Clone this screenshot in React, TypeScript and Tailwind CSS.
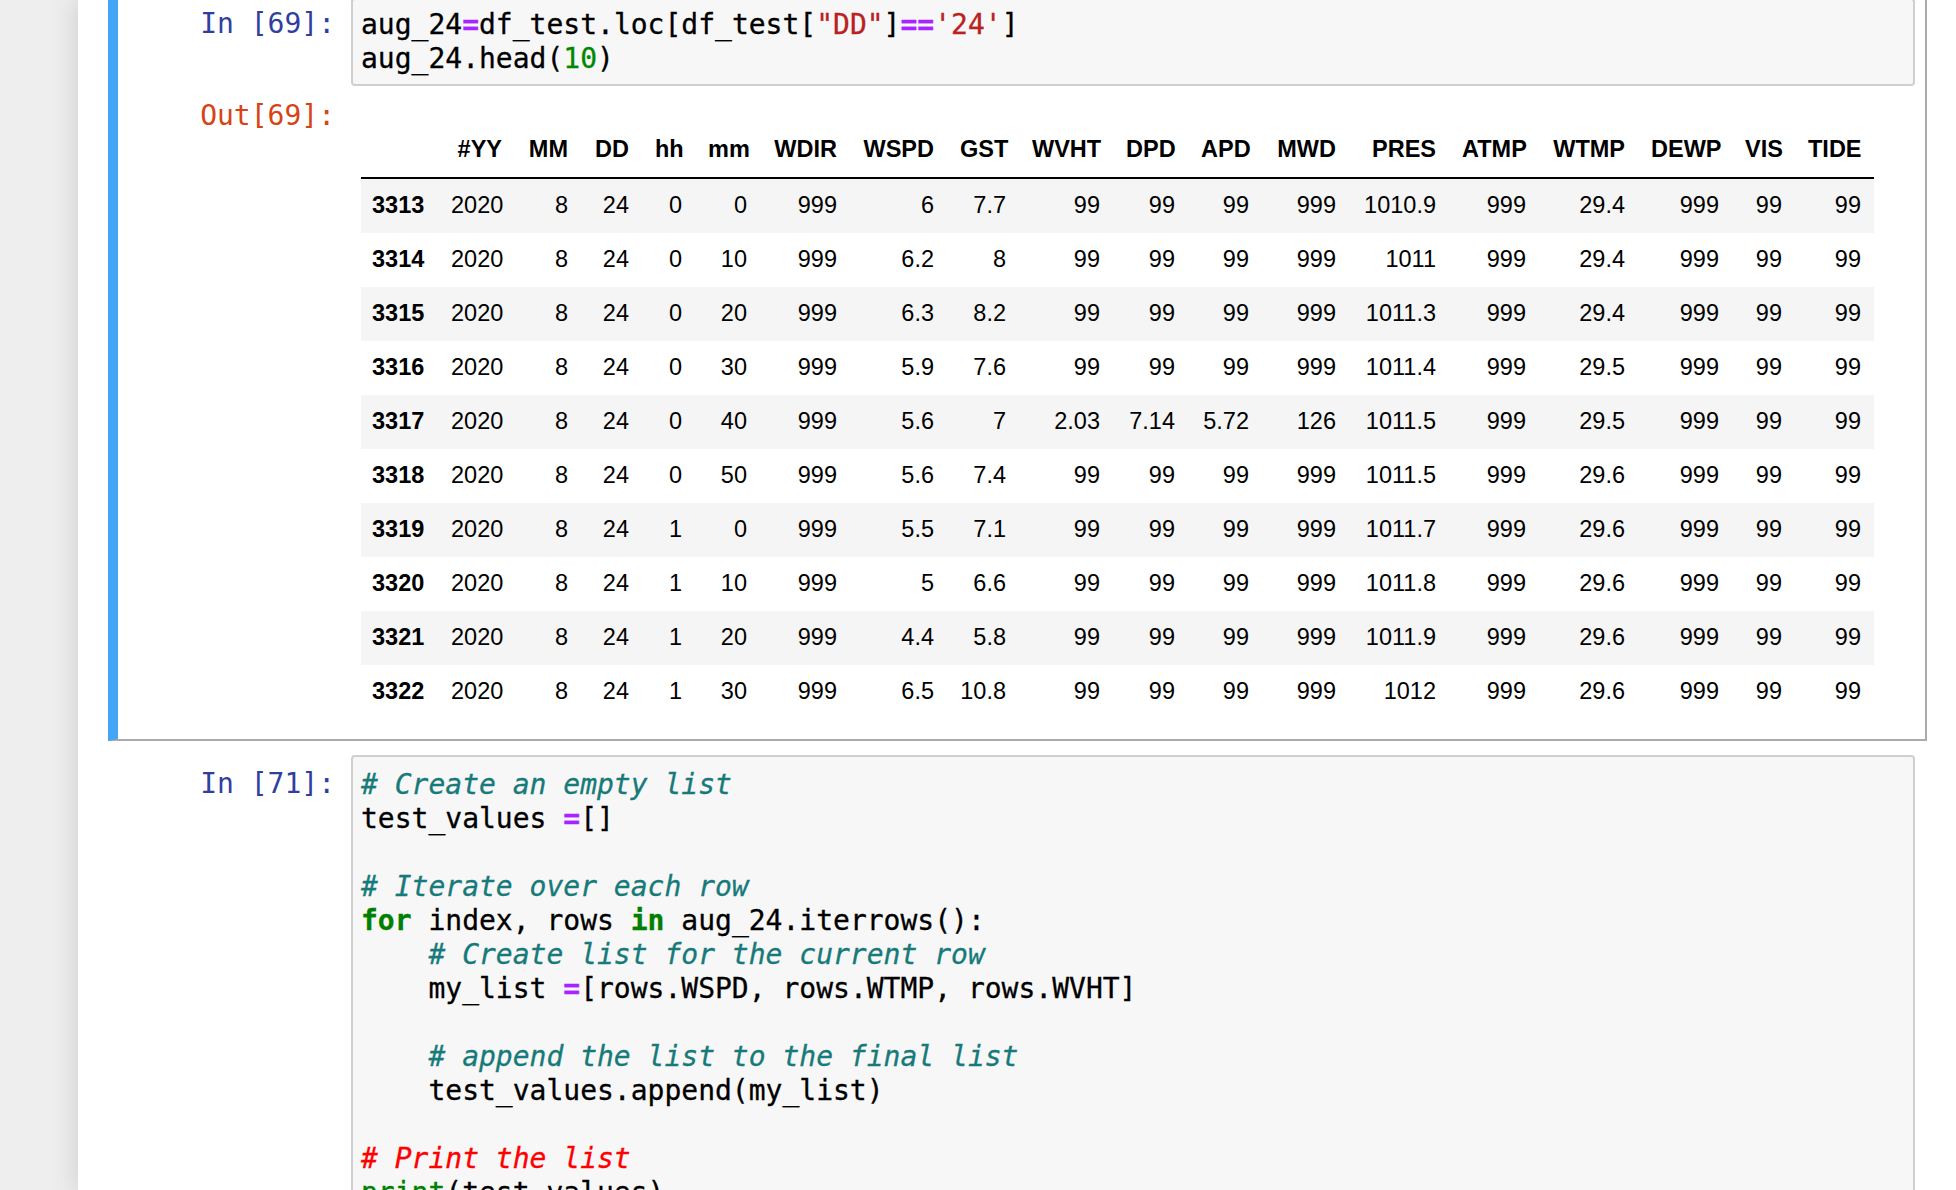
import React from "react";

const cols =
  "grid grid-cols-[77px_77px_66px_61px_53px_65px_90px_97px_72px_94px_75px_74px_87px_100px_90px_99px_94px_63px_79px]";

const headers = ["", "#YY", "MM", "DD", "hh", "mm", "WDIR", "WSPD", "GST", "WVHT", "DPD", "APD", "MWD", "PRES", "ATMP", "WTMP", "DEWP", "VIS", "TIDE"];

const rows: string[][] = [
  ["3313", "2020", "8", "24", "0", "0", "999", "6", "7.7", "99", "99", "99", "999", "1010.9", "999", "29.4", "999", "99", "99"],
  ["3314", "2020", "8", "24", "0", "10", "999", "6.2", "8", "99", "99", "99", "999", "1011", "999", "29.4", "999", "99", "99"],
  ["3315", "2020", "8", "24", "0", "20", "999", "6.3", "8.2", "99", "99", "99", "999", "1011.3", "999", "29.4", "999", "99", "99"],
  ["3316", "2020", "8", "24", "0", "30", "999", "5.9", "7.6", "99", "99", "99", "999", "1011.4", "999", "29.5", "999", "99", "99"],
  ["3317", "2020", "8", "24", "0", "40", "999", "5.6", "7", "2.03", "7.14", "5.72", "126", "1011.5", "999", "29.5", "999", "99", "99"],
  ["3318", "2020", "8", "24", "0", "50", "999", "5.6", "7.4", "99", "99", "99", "999", "1011.5", "999", "29.6", "999", "99", "99"],
  ["3319", "2020", "8", "24", "1", "0", "999", "5.5", "7.1", "99", "99", "99", "999", "1011.7", "999", "29.6", "999", "99", "99"],
  ["3320", "2020", "8", "24", "1", "10", "999", "5", "6.6", "99", "99", "99", "999", "1011.8", "999", "29.6", "999", "99", "99"],
  ["3321", "2020", "8", "24", "1", "20", "999", "4.4", "5.8", "99", "99", "99", "999", "1011.9", "999", "29.6", "999", "99", "99"],
  ["3322", "2020", "8", "24", "1", "30", "999", "6.5", "10.8", "99", "99", "99", "999", "1012", "999", "29.6", "999", "99", "99"],
];

const Op = ({ children }: { children: React.ReactNode }) => (
  <span className="text-[#aa22ff] font-bold">{children}</span>
);
const Str = ({ children }: { children: React.ReactNode }) => (
  <span className="text-[#ba2121]">{children}</span>
);
const Kw = ({ children }: { children: React.ReactNode }) => (
  <span className="text-[#008000] font-bold">{children}</span>
);
const Cm = ({ children }: { children: React.ReactNode }) => (
  <span className="text-[#177a7a] italic">{children}</span>
);

const Line = ({ children }: { children?: React.ReactNode }) => (
  <div className="h-[34px] leading-[34px] whitespace-pre">{children}</div>
);

function Prompt({ text, color }: { text: string; color: string }) {
  return (
    <div
      className={`w-[223px] shrink-0 text-right pr-[16px] whitespace-pre font-['DejaVu_Sans_Mono',monospace] text-[28px] leading-[34px] ${color}`}
    >
      {text}
    </div>
  );
}

export default function App() {
  return (
    <div className="w-[1956px] h-[1190px] overflow-hidden bg-[#eeeeee] flex">
      <div className="w-[78px] shrink-0" />
      <div className="w-[1880px] shrink-0 bg-white shadow-[0_0_24px_2px_rgba(87,87,87,0.2)] flex flex-col pl-[30px]">
        {/* Cell 1 (selected) */}
        <div className="-mt-[14px] w-[1819px] border-2 border-[#ababab] border-l-[10px] border-l-[#42a5f5] p-[10px] pb-[11px] flex flex-col">
          <div className="flex">
            <div className="pt-[9px]">
              <Prompt text="In [69]:" color="text-[#303f9f]" />
            </div>
            <div className="w-[1564px] border-2 border-[#cfcfcf] rounded-[4px] bg-[#f7f7f7] px-[8px] py-[8px] font-['DejaVu_Sans_Mono',monospace] text-[28px] text-black [-webkit-text-stroke:0.3px_currentColor]">
              <Line>
                aug_24<Op>=</Op>df_test.loc[df_test[<Str>"DD"</Str>]<Op>==</Op><Str>'24'</Str>]
              </Line>
              <Line>
                aug_24.head(<span className="text-[#008800]">10</span>)
              </Line>
            </div>
          </div>
          <div className="flex">
            <div className="pt-[13px]">
              <Prompt text="Out[69]:" color="text-[#d84315]" />
            </div>
            <div className="pt-[37px] pb-[9px] pl-[10px] font-['Liberation_Sans',Arial,sans-serif] text-[23.5px] text-black">
              <div className={`${cols} items-center h-[56px] border-b-2 border-black font-bold`}>
                {headers.map((h, i) => (
                  <div key={i} className="px-[13px] text-right">
                    {h}
                  </div>
                ))}
              </div>
              {rows.map((r, ri) => (
                <div
                  key={ri}
                  className={`${cols} items-center h-[54px] ${ri % 2 === 0 ? "bg-[#f5f5f5]" : "bg-white"}`}
                >
                  {r.map((v, ci) => (
                    <div
                      key={ci}
                      className={ci === 0 ? "pl-[11px] pr-[13px] text-left font-bold" : "px-[13px] text-right"}
                    >
                      {v}
                    </div>
                  ))}
                </div>
              ))}
            </div>
          </div>
        </div>

        {/* Cell 2 */}
        <div className="w-[1819px] pl-[20px] pt-[14px] flex">
          <div className="pt-[12px]">
            <Prompt text="In [71]:" color="text-[#303f9f]" />
          </div>
          <div className="w-[1564px] h-[600px] border-2 border-[#cfcfcf] rounded-[4px] bg-[#f7f7f7] px-[8px] pt-[11px] pb-[8px] font-['DejaVu_Sans_Mono',monospace] text-[28px] text-black [-webkit-text-stroke:0.3px_currentColor]">
            <Line>
              <Cm># Create an empty list</Cm>
            </Line>
            <Line>
              test_values <Op>=</Op>[]
            </Line>
            <Line />
            <Line>
              <Cm># Iterate over each row</Cm>
            </Line>
            <Line>
              <Kw>for</Kw> index, rows <Kw>in</Kw> aug_24.iterrows():
            </Line>
            <Line>
              {"    "}
              <Cm># Create list for the current row</Cm>
            </Line>
            <Line>
              {"    "}my_list <Op>=</Op>[rows.WSPD, rows.WTMP, rows.WVHT]
            </Line>
            <Line />
            <Line>
              {"    "}
              <Cm># append the list to the final list</Cm>
            </Line>
            <Line>{"    "}test_values.append(my_list)</Line>
            <Line />
            <Line>
              <span className="text-[#ff0000] italic"># Print the list</span>
            </Line>
            <Line>
              <span className="text-[#008000]">print</span>(test_values)
            </Line>
          </div>
        </div>
      </div>
    </div>
  );
}
